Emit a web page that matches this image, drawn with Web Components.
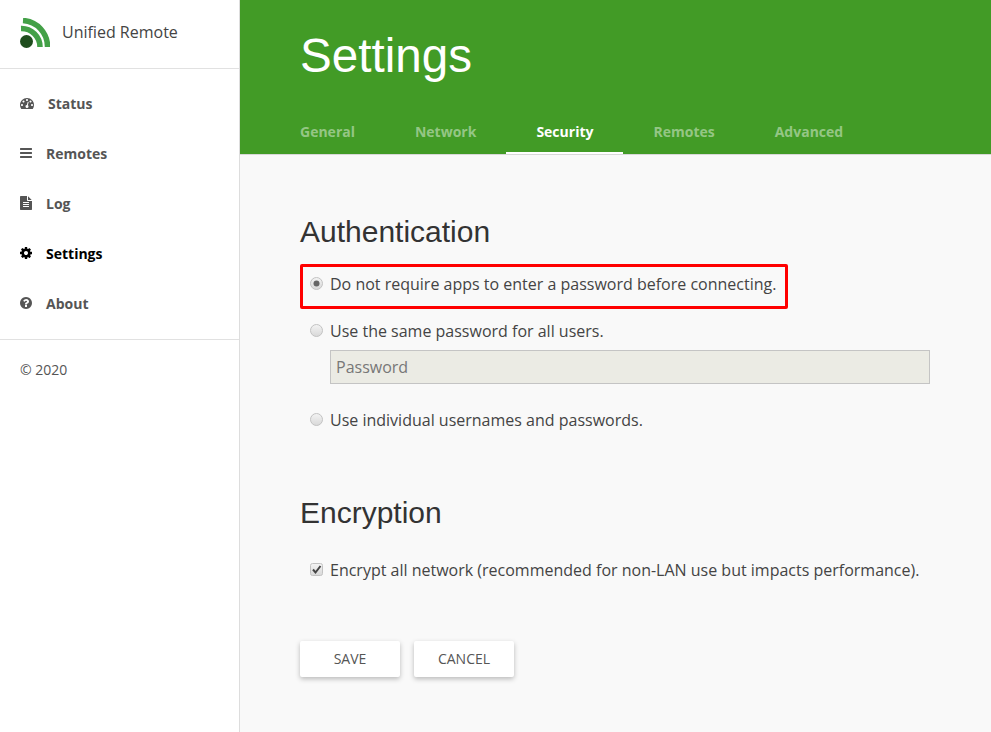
<!DOCTYPE html>
<html>
<head>
    <meta charset="utf-8">
    <title>Unified Remote</title>
    <style>
        html, body { margin: 0; height: 100%; }
        body { font-family: "Open Sans", sans-serif; color: #444; overflow: hidden; }
    </style>
</head>

<body>
    <ur-app>
        <ur-sidebar slot="side">
            <ur-nav icon="dashboard">Status</ur-nav>
            <ur-nav icon="bars">Remotes</ur-nav>
            <ur-nav icon="file">Log</ur-nav>
            <ur-nav icon="cog" active>Settings</ur-nav>
            <ur-nav icon="question">About</ur-nav>
        </ur-sidebar>
        <ur-header slot="head" title="Settings">
            <ur-tab>General</ur-tab>
            <ur-tab>Network</ur-tab>
            <ur-tab active>Security</ur-tab>
            <ur-tab>Remotes</ur-tab>
            <ur-tab>Advanced</ur-tab>
        </ur-header>
        <ur-section title="Authentication">
            <ur-option type="radio" checked highlight>Do not require apps to enter a password before connecting.</ur-option>
            <ur-option type="radio">Use the same password for all users.</ur-option>
            <ur-field placeholder="Password"></ur-field>
            <ur-option type="radio">Use individual usernames and passwords.</ur-option>
        </ur-section>
        <ur-section title="Encryption">
            <ur-option type="check" checked style="margin-top: 27px">Encrypt all network (recommended for non-LAN use but impacts performance).</ur-option>
        </ur-section>
        <ur-actions>
            <ur-button>Save</ur-button>
            <ur-button>Cancel</ur-button>
        </ur-actions>
    </ur-app>

    <script>
        const ICONS = {
            dashboard: ['0 0 1792 1792', 14, 'M384 1152q0-53-37.5-90.5t-90.5-37.5-90.5 37.5-37.5 90.5 37.5 90.5 90.5 37.5 90.5-37.5 37.5-90.5zm192-448q0-53-37.5-90.5t-90.5-37.5-90.5 37.5-37.5 90.5 37.5 90.5 90.5 37.5 90.5-37.5 37.5-90.5zm428 481l101-382q6-26-7.5-48.5t-38.5-29.5-48 6.5-30 39.5l-101 382q-60 5-107 43.5t-63 98.5q-20 77 20 146t117 89 146-20 89-117q16-60-6-117t-72-91zm660-33q0-53-37.5-90.5t-90.5-37.5-90.5 37.5-37.5 90.5 37.5 90.5 90.5 37.5 90.5-37.5 37.5-90.5zm-640-640q0-53-37.5-90.5t-90.5-37.5-90.5 37.5-37.5 90.5 37.5 90.5 90.5 37.5 90.5-37.5 37.5-90.5zm448 192q0-53-37.5-90.5t-90.5-37.5-90.5 37.5-37.5 90.5 37.5 90.5 90.5 37.5 90.5-37.5 37.5-90.5zm320 448q0 261-141 483-19 29-54 29h-1402q-35 0-54-29-141-221-141-483 0-182 71-348t191-286 286-191 348-71 348 71 286 191 191 286 71 348z'],
            bars: ['128 0 1536 1792', 12, 'M1664 1344v128q0 26-19 45t-45 19h-1408q-26 0-45-19t-19-45v-128q0-26 19-45t45-19h1408q26 0 45 19t19 45zm0-512v128q0 26-19 45t-45 19h-1408q-26 0-45-19t-19-45v-128q0-26 19-45t45-19h1408q26 0 45 19t19 45zm0-512v128q0 26-19 45t-45 19h-1408q-26 0-45-19t-19-45v-128q0-26 19-45t45-19h1408q26 0 45 19t19 45z'],
            file: ['128 0 1536 1792', 12, 'M1596 476q14 14 28 36h-472v-472q22 14 36 28zm-476 164h544v1056q0 40-28 68t-68 28h-1344q-40 0-68-28t-28-68v-1600q0-40 28-68t68-28h800v544q0 40 28 68t68 28zm160 736v-64q0-14-9-23t-23-9h-704q-14 0-23 9t-9 23v64q0 14 9 23t23 9h704q14 0 23-9t9-23zm0-256v-64q0-14-9-23t-23-9h-704q-14 0-23 9t-9 23v64q0 14 9 23t23 9h704q14 0 23-9t9-23zm0-256v-64q0-14-9-23t-23-9h-704q-14 0-23 9t-9 23v64q0 14 9 23t23 9h704q14 0 23-9t9-23z'],
            cog: ['128 0 1536 1792', 12, 'M1152 896q0-106-75-181t-181-75-181 75-75 181 75 181 181 75 181-75 75-181zm512-109v222q0 12-8 23t-20 13l-185 28q-19 54-39 91 35 50 107 138 10 12 10 25t-9 23q-27 37-99 108t-94 71q-12 0-26-9l-138-108q-44 23-91 38-16 136-29 186-7 28-36 28h-222q-14 0-24.5-8.5t-11.5-21.5l-28-184q-49-16-90-37l-141 107q-10 9-25 9-14 0-25-11-126-114-165-168-7-10-7-23 0-12 8-23 15-21 51-66.5t54-70.5q-27-50-41-99l-183-27q-13-2-21-12.5t-8-23.5v-222q0-12 8-23t19-13l186-28q14-46 39-92-40-57-107-138-10-12-10-24 0-10 9-23 26-36 98.5-107.5t94.5-71.5q13 0 26 10l138 107q44-23 91-38 16-136 29-186 7-28 36-28h222q14 0 24.5 8.5t11.5 21.5l28 184q49 16 90 37l142-107q9-9 24-9 13 0 25 10 129 119 165 170 7 8 7 22 0 12-8 23-15 21-51 66.5t-54 70.5q26 50 41 98l183 28q13 2 21 12.5t8 23.5z'],
            question: ['128 0 1536 1792', 12, 'M1024 1376v-192q0-14-9-23t-23-9h-192q-14 0-23 9t-9 23v192q0 14 9 23t23 9h192q14 0 23-9t9-23zm256-672q0-88-55.5-163t-138.5-116-170-41q-243 0-371 213-15 24 8 42l132 100q7 6 19 6 16 0 25-12 53-68 86-92 34-24 86-24 48 0 85.5 26t37.5 59q0 38-20 61t-68 45q-63 28-115.5 86.5t-52.5 125.5v36q0 14 9 23t23 9h192q14 0 23-9t9-23q0-19 21.5-49.5t54.5-49.5q32-18 49-28.5t46-35 44.5-48 28-60.5 12.5-81zm384 192q0 209-103 385.5t-279.5 279.5-385.5 103-385.5-103-279.5-279.5-103-385.5 103-385.5 279.5-279.5 385.5-103 385.5 103 279.5 279.5 103 385.5z']
        };

        // small helper so every element below stays a few lines
        function shadow(el, html) {
            el.attachShadow({ mode: 'open' }).innerHTML = html;
        }

        class UrApp extends HTMLElement {
            constructor() {
                super();
                shadow(this, `<style>
                    :host { display: flex; height: 732px; background: #f9f9f9; }
                    .side { flex: 0 0 240px; }
                    .main { flex: 1; min-width: 0; display: flex; flex-direction: column; }
                    .body { padding: 19px 61px 0 60px; }
                </style>
                <div class="side"><slot name="side"></slot></div>
                <div class="main">
                    <slot name="head"></slot>
                    <div class="body"><slot></slot></div>
                </div>`);
            }
        }

        class UrSidebar extends HTMLElement {
            constructor() {
                super();
                shadow(this, `<style>
                    :host { display: block; height: 732px; box-sizing: border-box; background: #fff; border-right: 1px solid #ddd; }
                    .brand { height: 69px; box-sizing: border-box; border-bottom: 1px solid #e1e1e1; padding: 18px 0 0 20px; display: flex; gap: 12px; }
                    .brand svg { display: block; }
                    .brand span { font-size: 16px; line-height: 28px; color: #444; }
                    nav { display: block; padding: 9px 0 11px; border-bottom: 1px solid #e1e1e1; }
                    .copy { padding: 20px 20px; font-size: 14px; line-height: 20px; color: #555; }
                </style>
                <div class="brand">
                    <svg width="30" height="31" viewBox="0 0 30 31">
                        <path d="M3 2.500A26 26 0 0 1 27.500 29" fill="none" stroke="#43a047" stroke-width="5.500"/>
                        <path d="M1 10.500A18.500 18.500 0 0 1 20 29" fill="none" stroke="#43a047" stroke-width="5.500"/>
                        <circle cx="6.500" cy="23.500" r="6.500" fill="#1f4d1d"/>
                    </svg>
                    <span>Unified Remote</span>
                </div>
                <nav><slot></slot></nav>
                <div class="copy">© 2020</div>`);
            }
        }

        class UrNav extends HTMLElement {
            constructor() {
                super();
                const [box, w, d] = ICONS[this.getAttribute('icon')];
                shadow(this, `<style>
                    :host { display: flex; align-items: center; gap: 14px; height: 50px; padding-left: 20px; font-size: 14px; font-weight: 700; color: #555; }
                    :host([active]) { color: #000; }
                    svg { display: block; fill: currentColor; }
                </style>
                <svg width="${w}" height="14" viewBox="${box}"><path d="${d}"/></svg>
                <slot></slot>`);
            }
        }

        class UrHeader extends HTMLElement {
            constructor() {
                super();
                shadow(this, `<style>
                    :host { display: block; height: 155px; box-sizing: border-box; background: #429b26; border-bottom: 1px solid #d8d8d8; }
                    h1 { margin: 0; padding: 26px 0 0 60px; height: 110px; box-sizing: border-box; font: 400 47.600px/60px "Liberation Sans", sans-serif; color: #fff; }
                    .tabs { display: flex; padding-left: 30px; height: 44px; }
                </style>
                <h1>${this.getAttribute('title')}</h1>
                <div class="tabs"><slot></slot></div>`);
            }
        }

        class UrTab extends HTMLElement {
            constructor() {
                super();
                shadow(this, `<style>
                    :host { display: block; box-sizing: border-box; height: 44px; padding: 0 30px; font-size: 14px; font-weight: 700; line-height: 44px; color: rgba(255,255,255,.45); }
                    :host([active]) { color: #fff; border-bottom: 2px solid #fff; }
                </style><slot></slot>`);
            }
        }

        class UrSection extends HTMLElement {
            constructor() {
                super();
                shadow(this, `<style>
                    :host { display: block; padding-top: 40px; }
                    h2 { margin: 0 0 22px; font: 400 30px/36px "Liberation Sans", sans-serif; color: #333; }
                </style>
                <h2>${this.getAttribute('title')}</h2>
                <slot></slot>`);
            }
        }

        class UrOption extends HTMLElement {
            constructor() {
                super();
                const radio = this.getAttribute('type') === 'radio';
                const on = this.hasAttribute('checked');
                const mark = radio
                    ? (on ? '<circle cx="6.500" cy="6.500" r="3" fill="#666"/>' : '')
                    : (on ? '<path d="M3 6.500l2.500 3 5-6.500" fill="none" stroke="#444" stroke-width="2"/>' : '');
                const shape = radio
                    ? '<circle cx="6.500" cy="6.500" r="6" fill="url(#g)" stroke="#c2c2c2"/>'
                    : '<rect x=".5" y=".5" width="12" height="12" rx="2" fill="url(#g)" stroke="#c2c2c2"/>';
                shadow(this, `<style>
                    :host { display: flex; align-items: center; position: relative; gap: 7px; height: 24px; margin-bottom: 23px; padding-left: 10px; font-size: 16px; line-height: 24px; color: #444; }
                    svg { display: block; flex: none; margin-top: -2px; }
                    .mark { display: none; position: absolute; left: 0; top: -8px; width: 488px; height: 45px; box-sizing: border-box; border: 3px solid #f00; border-radius: 2px; }
                    :host([highlight]) .mark { display: block; }
                </style>
                <svg width="13" height="13" viewBox="0 0 13 13">
                    <defs><linearGradient id="g" x1="0" y1="0" x2="0" y2="1"><stop offset="0" stop-color="#f4f4f4"/><stop offset="1" stop-color="#d8d8d8"/></linearGradient></defs>
                    ${shape}${mark}
                </svg>
                <slot></slot>
                <div class="mark"></div>`);
            }
        }

        class UrField extends HTMLElement {
            constructor() {
                super();
                shadow(this, `<style>
                    :host { display: block; margin: -16px 0 24px 30px; }
                    input { display: block; width: 100%; height: 34px; box-sizing: border-box; padding: 0 5px; border: 1px solid #c4c4c4; background: #ebebe4; font: 16px "Open Sans", sans-serif; color: #444; }
                    input::placeholder { color: #777; opacity: 1; }
                </style>
                <input disabled placeholder="${this.getAttribute('placeholder')}">`);
            }
        }

        class UrActions extends HTMLElement {
            constructor() {
                super();
                shadow(this, `<style>
                    :host { display: flex; gap: 14px; padding-top: 36px; }
                </style><slot></slot>`);
            }
        }

        class UrButton extends HTMLElement {
            constructor() {
                super();
                shadow(this, `<style>
                    :host { display: block; width: 100px; height: 36px; border-radius: 2px; background: #fff; box-shadow: 0 2px 5px rgba(0,0,0,.26); font-size: 14px; line-height: 36px; text-align: center; text-transform: uppercase; color: #555; }
                </style><slot></slot>`);
            }
        }

        customElements.define('ur-app', UrApp);
        customElements.define('ur-sidebar', UrSidebar);
        customElements.define('ur-nav', UrNav);
        customElements.define('ur-header', UrHeader);
        customElements.define('ur-tab', UrTab);
        customElements.define('ur-section', UrSection);
        customElements.define('ur-option', UrOption);
        customElements.define('ur-field', UrField);
        customElements.define('ur-actions', UrActions);
        customElements.define('ur-button', UrButton);
    </script>
</body>
</html>
